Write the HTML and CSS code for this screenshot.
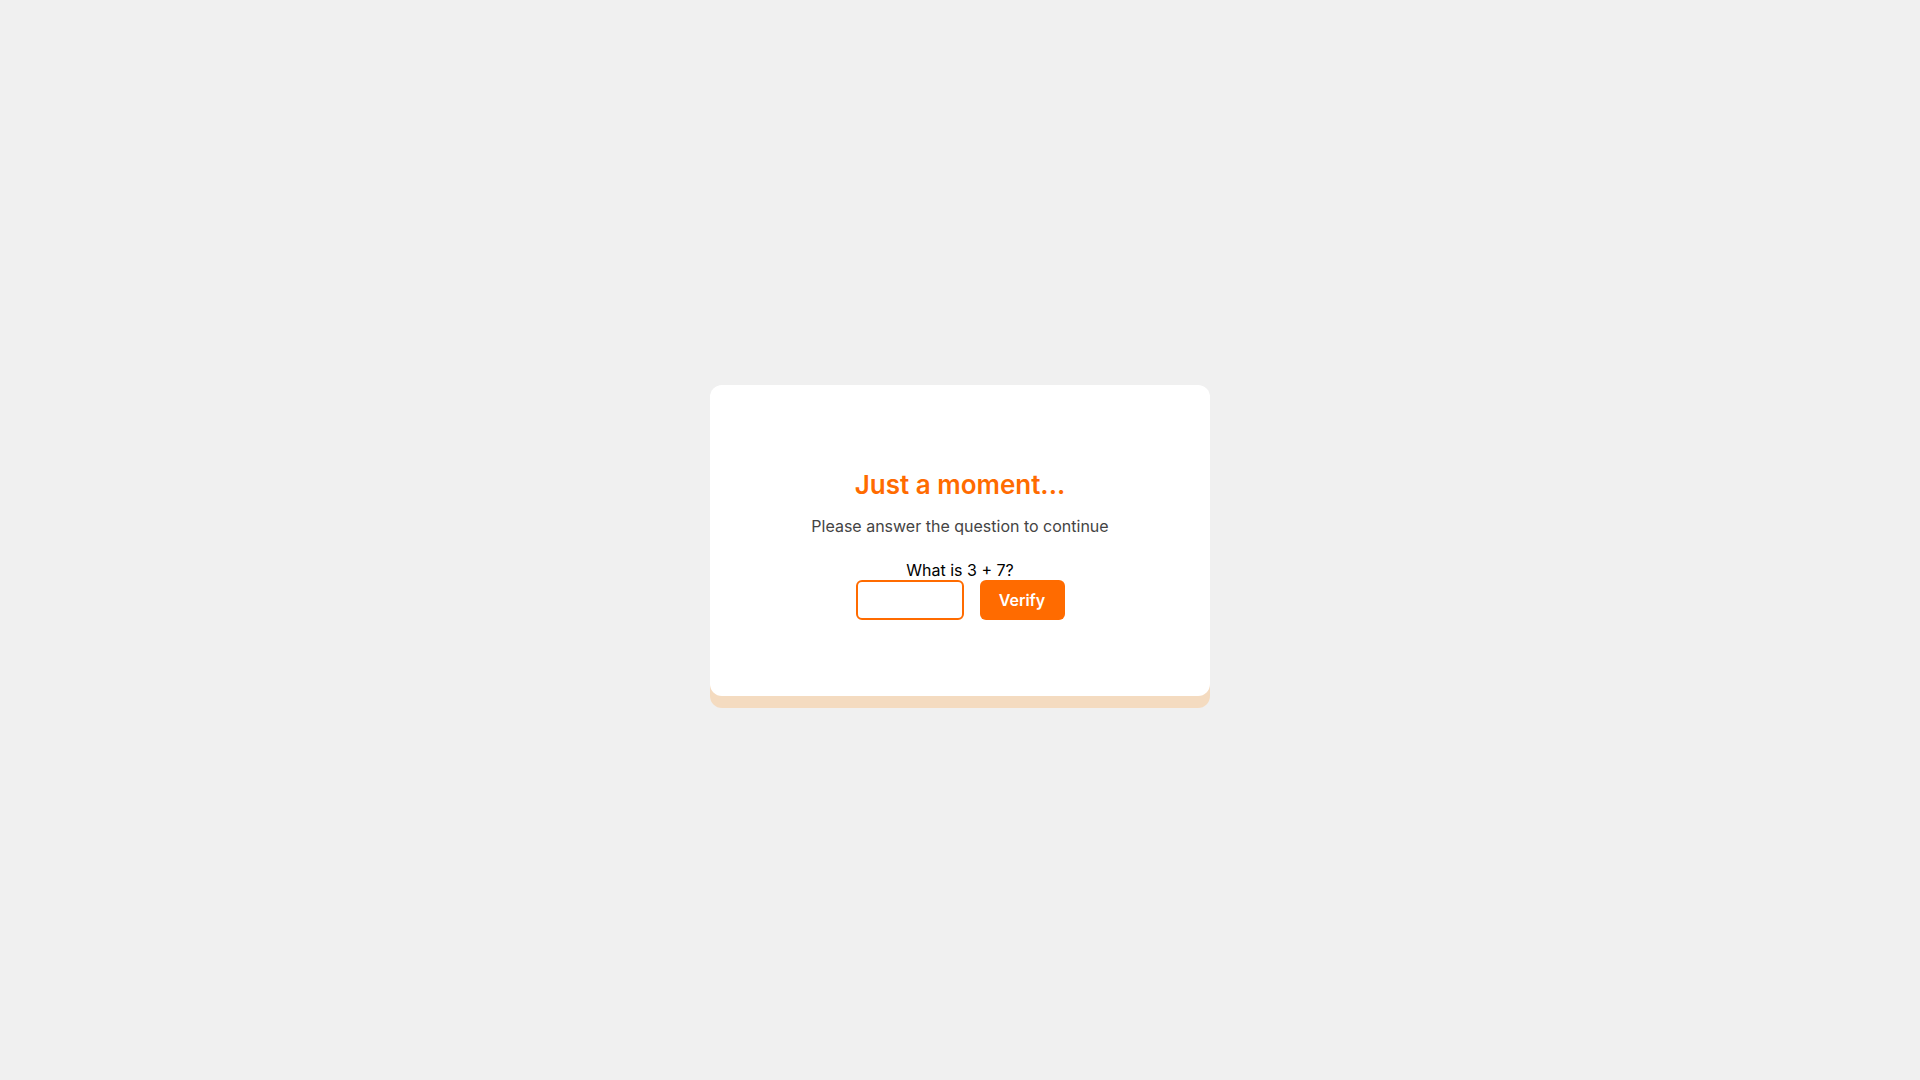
FILE: index.html
```html
<!DOCTYPE html>
<html lang="en">
	<head>
		<meta charset="utf-8">
		<meta name="viewport" content="width=device-width, initial-scale=1">
		<title>Just a moment...</title>
		<link rel="stylesheet" href="styles.css">
	</head>
	<body>
		<main class="card">
			<h1 class="title">Just a moment...</h1>
			<p class="message">Please answer the question to continue</p>
			<form class="challenge">
				<label class="question" for="answer">What is 3 + 7?</label>
				<div class="controls">
					<input class="answer" id="answer" name="answer" type="text" autocomplete="off" required>
					<button class="verify" type="submit">Verify</button>
				</div>
			</form>
		</main>
	</body>
</html>
```
FILE: styles.css
```css
* {
	box-sizing: border-box;
}

body {
	display: flex;
	align-items: center;
	justify-content: center;
	min-height: 100vh;
	margin: 0;
	background-color: #f0f0f0;
	color: #000;
	font-family: Inter, sans-serif;
	font-size: 16px;
}

.card {
	width: 100%;
	max-width: 500px;
	padding: 80px 40px 76px;
	border-radius: 12px;
	background-color: #fff;
	box-shadow: 0 12px 0 #f4dbc0;
	text-align: center;
}

.title {
	margin: 0 0 11px;
	color: #ff6b00;
	font-size: 26px;
	font-weight: 600;
	line-height: 40px;
}

.message {
	margin: 0 0 24px;
	color: #444;
	line-height: 20px;
}

.question {
	display: block;
	line-height: 20px;
}

.controls {
	display: flex;
	justify-content: center;
	gap: 16px;
}

.answer {
	width: 108px;
	height: 40px;
	padding: 8px;
	border: 2px solid #ff6b00;
	border-radius: 6px;
	background-color: #fff;
	font: inherit;
	text-align: center;
}

.answer:focus {
	outline: none;
}

.verify {
	width: 85px;
	height: 40px;
	padding: 0;
	border: none;
	border-radius: 6px;
	background-color: #ff6b00;
	color: #fff;
	font: inherit;
	font-weight: 600;
	cursor: pointer;
}

.verify:hover {
	background-color: #e66000;
}
```
